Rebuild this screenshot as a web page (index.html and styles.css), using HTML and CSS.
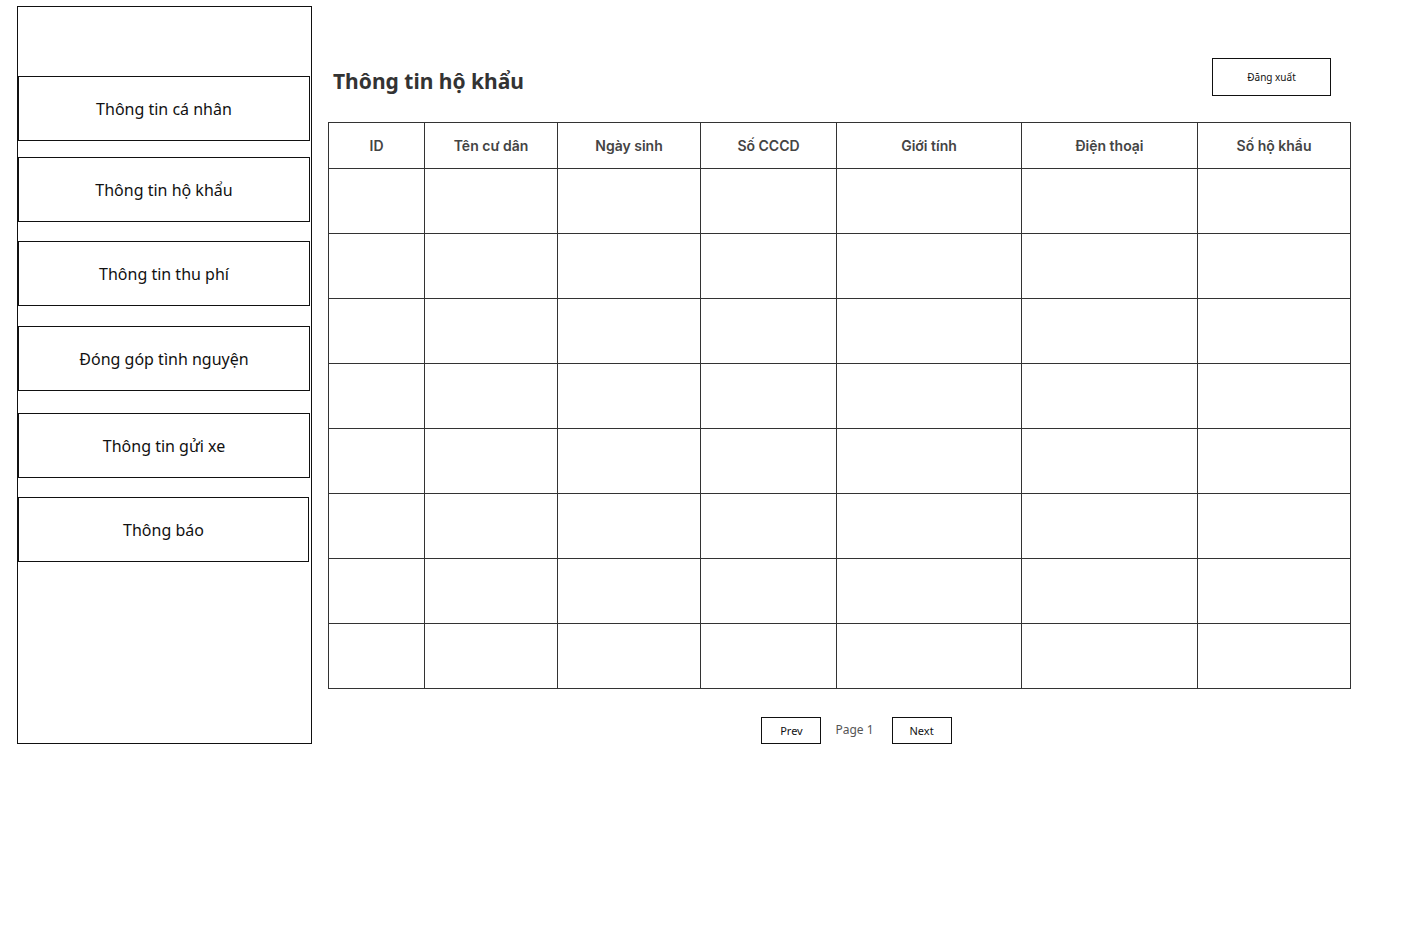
FILE: index.html
```html
<!DOCTYPE html>
<html lang="vi">
<head>
  <meta charset="UTF-8" />
  <meta name="viewport" content="width=device-width, initial-scale=1.0"/>
  <title>Thông tin hộ khẩu</title>
  <link rel="stylesheet" href="styles.css">
</head>
<body>

  <div class="page">

    <!-- Sidebar menu -->
    <aside class="sidebar">
      <div class="menu-item">Thông tin cá nhân</div>
      <div class="menu-item">Thông tin hộ khẩu</div>
      <div class="menu-item">Thông tin thu phí</div>
      <div class="menu-item">Đóng góp tình nguyện</div>
      <div class="menu-item">Thông tin gửi xe</div>
      <div class="menu-item">Thông báo</div>
    </aside>

    <!-- Main content -->
    <main class="content">
      <div class="content-header">
        <h2>Thông tin hộ khẩu</h2>
        <button class="logout">Đăng xuất</button>
      </div>

      <table class="household-table">
        <thead>
          <tr>
            <th class="col-id">ID</th>
            <th class="col-name">Tên cư dân</th>
            <th class="col-dob">Ngày sinh</th>
            <th class="col-cccd">Số CCCD</th>
            <th class="col-gender">Giới tính</th>
            <th class="col-phone">Điện thoại</th>
            <th class="col-book">Số hộ khẩu</th>
          </tr>
        </thead>
        <tbody id="householdTable">
          <!-- rows filled by script below -->
        </tbody>
      </table>

      <div class="pagination">
        <button>Prev</button>
        <span class="page-label">Page 1</span>
        <button>Next</button>
      </div>
    </main>

  </div>

  <script>
    const table = document.getElementById('householdTable');
    for (let i = 0; i < 8; i++) {
      const row = document.createElement('tr');
      row.innerHTML = '<td></td><td></td><td></td><td></td><td></td><td></td><td></td>';
      table.appendChild(row);
    }
  </script>

</body>
</html>
```

FILE: styles.css
```css
body {
  margin: 0;
  padding: 0;
  font-family: "Noto Sans", "DejaVu Sans", sans-serif;
  background: #fff;
  color: #111;
}

.page {
  display: flex;
  align-items: flex-start;
  gap: 16px;
  padding: 6px 17px;
}

.sidebar {
  width: 295px;
  height: 738px;
  border: 1px solid #111;
  padding-top: 69px;
  display: flex;
  flex-direction: column;
  box-sizing: border-box;
}

.menu-item {
  height: 63px;
  margin-right: 1px;
  border: 1px solid #111;
  display: flex;
  align-items: center;
  justify-content: center;
  font-size: 16px;
  color: #111;
}

/* spacing between menu boxes is uneven in the mockup */
.menu-item:nth-child(2) { margin-top: 16px; }
.menu-item:nth-child(3) { margin-top: 19px; }
.menu-item:nth-child(4) { margin-top: 20px; }
.menu-item:nth-child(5) { margin-top: 22px; }
.menu-item:nth-child(6) { margin-top: 19px; margin-right: 2px; }

.content {
  flex: 1;
  padding-top: 52px;
}

.content-header {
  display: flex;
  justify-content: space-between;
  align-items: flex-start;
  width: 1003px;
  padding-right: 54px;
  height: 38px;
}

.content-header h2 {
  margin: 9px 0 0 5px;
  font-size: 21px;
  font-weight: 700;
  color: #333;
}

.logout {
  width: 119px;
  height: 38px;
  background: #fff;
  border: 1px solid #111;
  font-family: "Noto Sans", sans-serif;
  font-size: 10px;
  color: #111;
  padding: 0;
}

.household-table {
  margin-top: 26px;
  width: 1023px;
  border-collapse: collapse;
  table-layout: fixed;
}

.household-table th,
.household-table td {
  border: 1px solid #333;
  padding: 0;
}

.household-table th {
  height: 45px;
  font-family: Inter, "Noto Sans", sans-serif;
  font-size: 14px;
  font-weight: 600;
  color: #444;
}

.household-table td {
  height: 64px;
}

.col-id { width: 95px; }
.col-name { width: 132px; }
.col-dob { width: 142px; }
.col-cccd { width: 135px; }
.col-gender { width: 184px; }
.col-phone { width: 175px; }
.col-book { width: 152px; }

.pagination {
  margin-top: 28px;
  display: flex;
  justify-content: center;
  align-items: center;
  gap: 14px;
}

.pagination button {
  width: 60px;
  height: 27px;
  background: #fff;
  border: 1px solid #111;
  font-family: "Noto Sans", sans-serif;
  font-size: 11px;
  color: #111;
  padding: 0;
}

.page-label {
  font-size: 12px;
  color: #555;
  margin-right: 4px;
  margin-top: -2px;
}
```
